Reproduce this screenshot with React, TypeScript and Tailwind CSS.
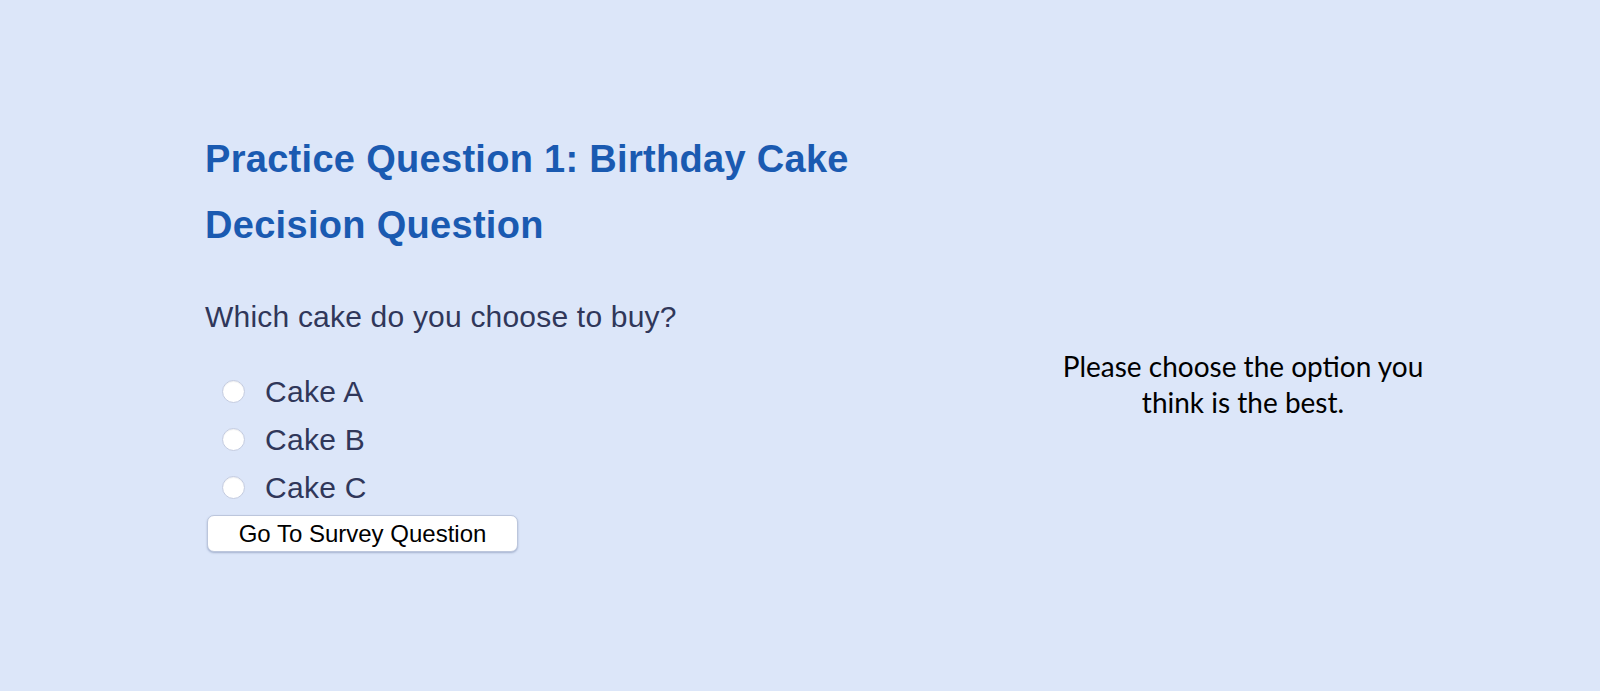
export default function App() {
  const options = ["Cake A", "Cake B", "Cake C"];

  return (
    <div className="flex h-[691px] w-full bg-[#dce6f9]">
      {/* Question column */}
      <div className="w-[886px] shrink-0 pl-[205px] pt-[126px] font-['Liberation_Sans',Arial,sans-serif]">
        <h1 className="text-[38px] font-bold leading-[66px] tracking-[0.3px] text-[#1a5ab1]">
          Practice Question 1: Birthday Cake
        </h1>
        <h2 className="text-[38px] font-bold leading-[66px] tracking-[0.3px] text-[#1a5ab1]">
          Decision Question
        </h2>

        <p className="mt-[39px] text-[30px] leading-[40px] tracking-[0.2px] text-[#30375a]">
          Which cake do you choose to buy?
        </p>

        <div className="mt-[30px] flex flex-col">
          {options.map((opt) => (
            <label key={opt} className="flex h-[48px] items-center gap-[20px] pl-[17px] text-[30px] tracking-[0.3px] text-[#30375a]">
              <span className="h-[23px] w-[23px] rounded-full border border-[#c3cbe0] bg-white shadow-[inset_0_1px_1px_rgba(0,0,0,0.06)]" />
              {opt}
            </label>
          ))}
        </div>

        <button className="ml-[2px] mt-[4px] h-[37px] w-[311px] rounded-[7px] border border-[#bcc6dc] bg-white text-[24px] leading-none text-black shadow-[0_1px_2px_rgba(60,80,130,0.35)]">
          Go To Survey Question
        </button>
      </div>

      {/* Instruction column */}
      <div className="flex-1 pt-[348px]">
        <p className="mx-auto max-w-[380px] text-center font-['Lato',sans-serif] text-[28px] leading-[36px] text-black">
          Please choose the option you think is the best.
        </p>
      </div>
    </div>
  );
}
